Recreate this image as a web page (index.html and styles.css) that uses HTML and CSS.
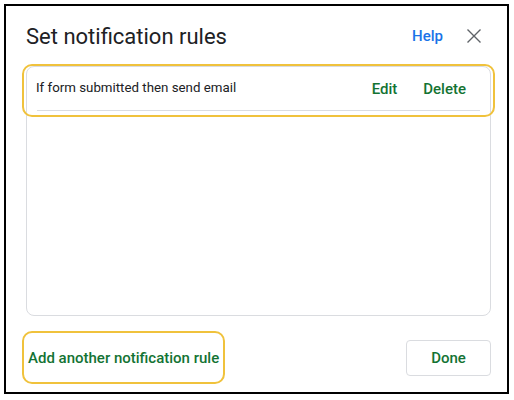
FILE: index.html
```html
<!DOCTYPE html>
<html lang="en">
<head>
<meta charset="utf-8">
<title>Set notification rules</title>
<link rel="stylesheet" href="styles.css">
</head>
<body>
<div class="frame">
  <div class="header">
    <h1 class="title">Set notification rules</h1>
    <div class="header-actions">
      <button class="help">Help</button>
      <button class="close" aria-label="Close">
        <svg width="24" height="24" viewBox="0 0 24 24"><path d="M5.5 5.5 L18.5 18.5 M18.5 5.5 L5.5 18.5" stroke="#5f6368" stroke-width="1.4" fill="none"/></svg>
      </button>
    </div>
  </div>
  <div class="list">
    <div class="rule">
      <span class="rule-text">If form submitted then send email</span>
      <div class="rule-actions">
        <button class="text-btn">Edit</button>
        <button class="text-btn">Delete</button>
      </div>
    </div>
    <div class="divider"></div>
  </div>
  <div class="footer">
    <button class="add">Add another notification rule</button>
    <button class="done">Done</button>
  </div>
</div>
</body>
</html>
```

FILE: styles.css
```css
html, body {
  margin: 0;
  padding: 0;
  background: #ffffff;
}
body {
  font-family: Roboto, "Liberation Sans", Arial, sans-serif;
  color: #202124;
}
button {
  font-family: inherit;
  background: none;
  border: none;
  padding: 0;
  margin: 0;
  cursor: pointer;
}
.frame {
  margin: 4px;
  width: 501px;
  height: 386px;
  border: 2px solid #000;
  display: flex;
  flex-direction: column;
}
.header {
  height: 60px;
  display: flex;
  align-items: center;
  justify-content: space-between;
  padding: 0 21px 0 20px;
}
.title {
  margin: 0;
  font-size: 22px;
  font-weight: 400;
  color: #202124;
  line-height: 28px;
  padding-top: 1px;
}
.header-actions {
  display: flex;
  align-items: center;
  gap: 11px;
}
.help {
  font-size: 15px;
  font-weight: 500;
  color: #1a73e8;
  padding: 0 8px;
  line-height: 24px;
}
.close {
  width: 24px;
  height: 24px;
  display: flex;
}
.list {
  margin: 0 16px 0 20px;
  height: 250px;
  box-sizing: border-box;
  border: 1px solid #dadce0;
  border-radius: 8px;
}
.rule {
  position: relative;
  height: 43px;
  display: flex;
  align-items: center;
  justify-content: space-between;
  padding: 0 16px 0 9px;
}
.rule::after {
  content: "";
  position: absolute;
  top: -3px;
  left: -5px;
  right: -5px;
  bottom: -7px;
  border: 2px solid #f0c23c;
  border-radius: 10px;
  pointer-events: none;
}
.rule-text {
  font-size: 13.3px;
  color: #202124;
  margin-top: -3px;
}
.rule-actions {
  display: flex;
  gap: 10px;
}
.text-btn {
  font-size: 15px;
  font-weight: 500;
  color: #137333;
  padding: 0 8px;
  line-height: 24px;
}
.divider {
  height: 1px;
  background: #dadce0;
  margin: 0 10px;
}
.footer {
  display: flex;
  align-items: center;
  justify-content: space-between;
  padding: 15px 16px 0 16px;
}
.add {
  height: 53px;
  box-sizing: border-box;
  border: 2px solid #f0c23c;
  border-radius: 10px;
  padding: 0 4px;
  font-size: 15px;
  font-weight: 500;
  color: #137333;
}
.done {
  width: 85px;
  height: 36px;
  box-sizing: border-box;
  border: 1px solid #dadce0;
  border-radius: 4px;
  font-size: 15px;
  font-weight: 500;
  color: #137333;
}
```
